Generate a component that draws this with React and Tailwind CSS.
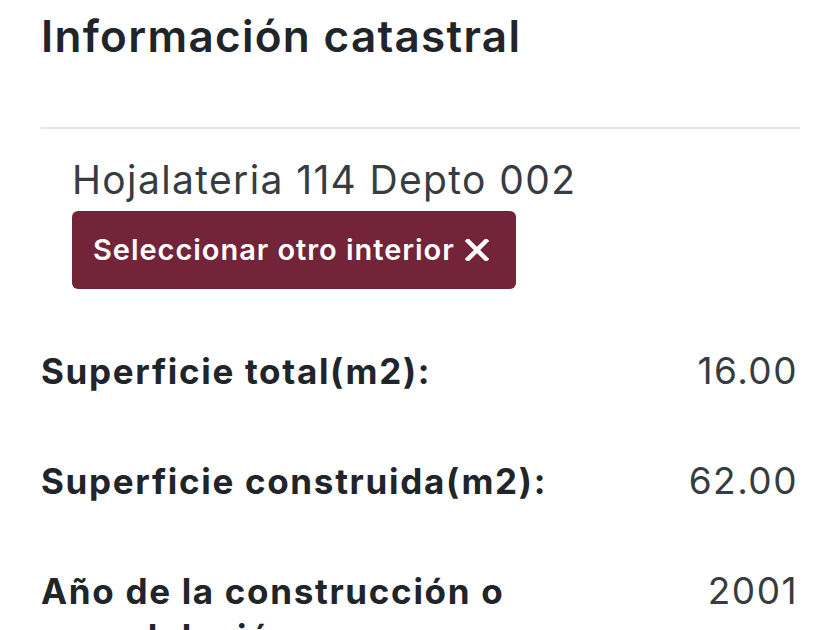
const rows = [
  { label: "Superficie total(m2):", value: "16.00" },
  { label: "Superficie construida(m2):", value: "62.00" },
  { label: "Año de la construcción o remodelación", value: "2001" },
];

const CloseIcon = () => (
  <svg width="24" height="22" viewBox="0 0 24 22" className="shrink-0">
    <path
      d="M3 2 L21 20 M21 2 L3 20"
      stroke="currentColor"
      strokeWidth="4.5"
      strokeLinecap="square"
      fill="none"
    />
  </svg>
);

const App = () => {
  return (
    <div
      className="w-[840px] h-[630px] overflow-hidden bg-white pl-[41px] pr-[42px]"
      style={{ fontFamily: "Inter, 'Noto Sans', sans-serif" }}
    >
      <h2 className="pt-[12px] text-[44px] leading-[48px] font-semibold tracking-[0.03em] text-[#212529]">
        Información catastral
      </h2>

      <hr className="mt-[67px] -mr-[2px] border-0 border-t-2 border-[#e3e6ea]" />

      <div className="pl-[31px] mt-[29px]">
        <p className="text-[39px] leading-[44px] tracking-[0.035em] text-[#373c41]">
          Hojalateria 114 Depto 002
        </p>
        <button className="mt-[9px] h-[78px] flex items-center gap-[10px] pl-[21px] pr-[27px] rounded-[6px] bg-[#732439] text-white text-[29px] font-semibold tracking-[0.033em]">
          Seleccionar otro interior
          <CloseIcon />
        </button>
      </div>

      <div className="mt-[59px] flex flex-col gap-[64px]">
        {rows.map((row) => (
          <div key={row.label} className="flex items-start justify-between">
            <span className="w-[580px] text-[35px] leading-[46px] font-bold tracking-[0.048em] text-[#212529]">
              {row.label}
            </span>
            <span className="text-[37px] leading-[46px] tracking-[0.04em] text-[#373c41]">
              {row.value}
            </span>
          </div>
        ))}
      </div>
    </div>
  );
};

export default App;
